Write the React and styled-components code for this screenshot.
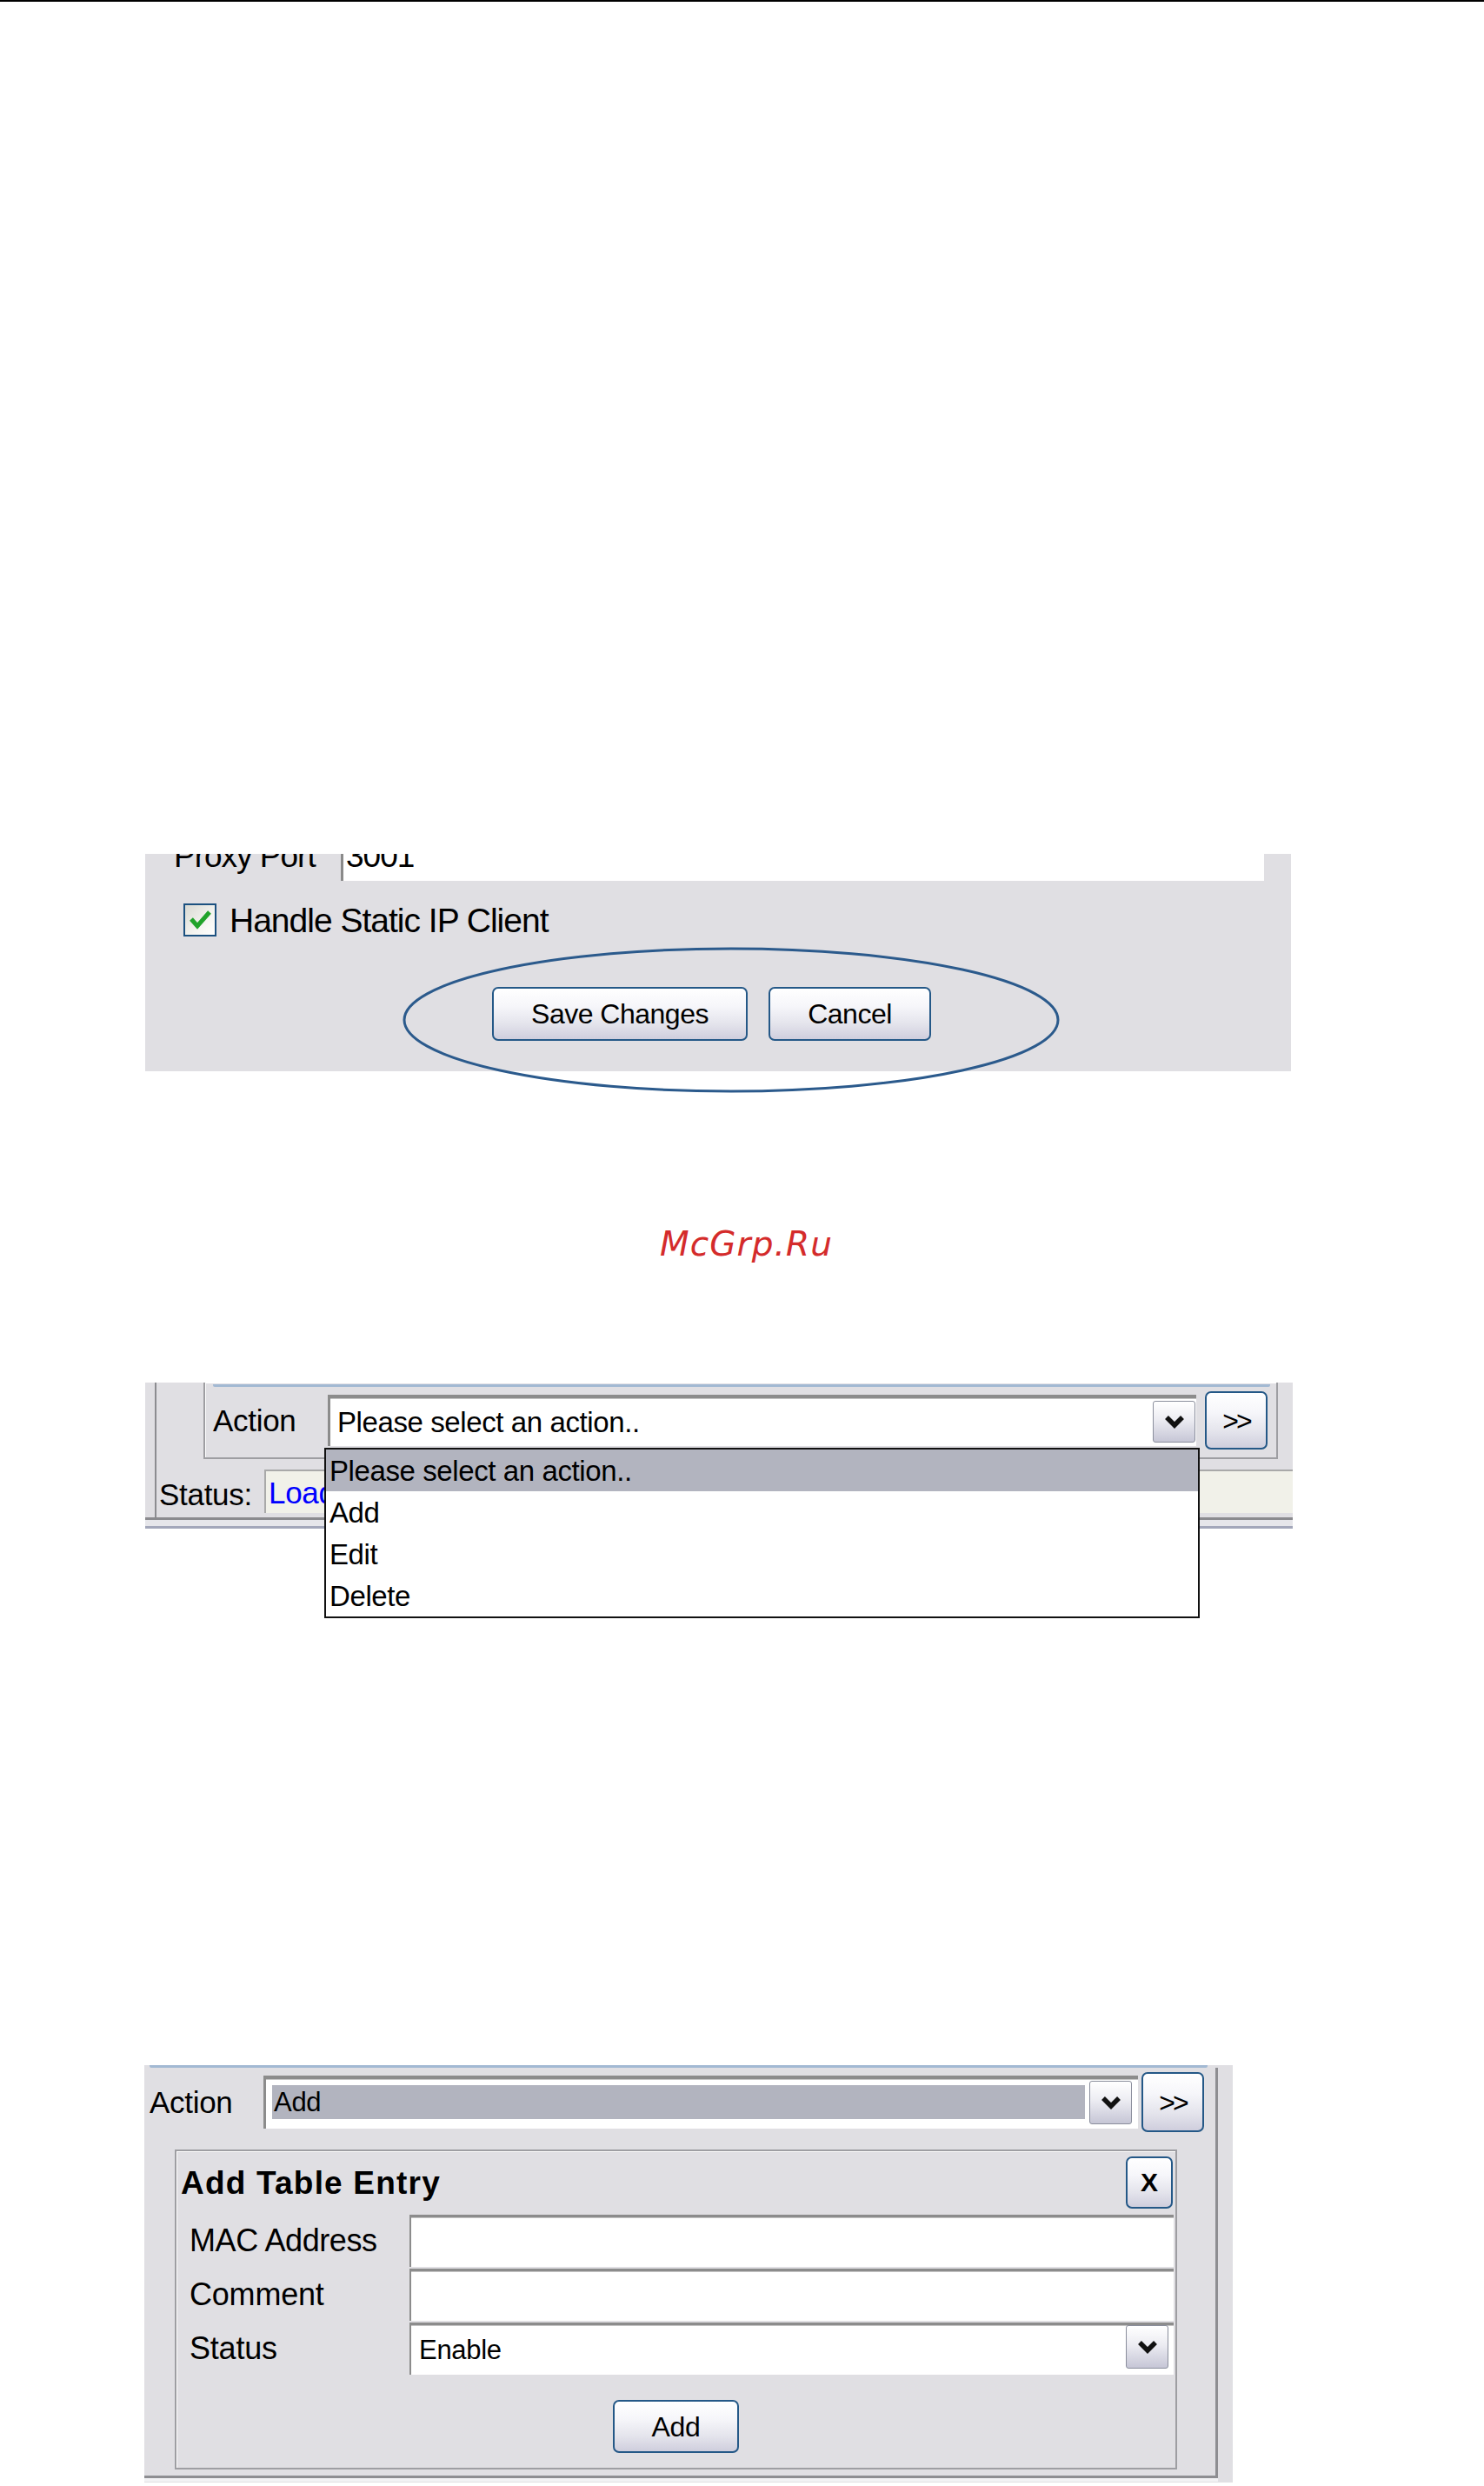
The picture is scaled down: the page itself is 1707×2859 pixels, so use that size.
import React from "react";
import styled, { createGlobalStyle } from "styled-components";

const GlobalStyle = createGlobalStyle`
  html, body { margin: 0; padding: 0; background: #ffffff; }
  body { font-family: "Liberation Sans", Arial, sans-serif; color: #000; }
  #root { width: 1707px; min-height: 2859px; }
`;

const Page = styled.div`
  width: 1707px;
  height: 2859px;
  display: flex;
  flex-direction: column;
  overflow: hidden;
  background: #fff;
`;

const TopRule = styled.div`
  flex: none;
  height: 2px;
  background: #000;
`;

const Shot = styled.div`
  flex: none;
  position: relative;
  margin-top: ${(p) => p.$top}px;
  margin-left: ${(p) => p.$left}px;
  width: ${(p) => p.$w}px;
`;

const Panel = styled.div`
  background: #e0dfe3;
  height: ${(p) => p.$h}px;
  overflow: hidden;
  display: flex;
  flex-direction: column;
`;

const Text = styled.span`
  font-size: ${(p) => p.$size || 35}px;
  letter-spacing: ${(p) => (p.$ls == null ? -0.5 : p.$ls)}px;
  font-weight: ${(p) => (p.$bold ? 700 : 400)};
  color: ${(p) => p.$color || "#000"};
  white-space: nowrap;
  line-height: 1;
`;

/* ---------- shot 1 ---------- */
const ProxyRow = styled.div`
  display: flex;
  align-items: center;
  height: 58px;
  margin-top: -27px;
  flex: none;
`;

const FieldLabel = styled.div`
  flex: none;
  width: ${(p) => p.$w}px;
  padding-left: ${(p) => p.$pl || 0}px;
  box-sizing: border-box;
`;

const PlainInput = styled.div`
  flex: none;
  width: ${(p) => p.$w}px;
  height: 100%;
  box-sizing: border-box;
  background: #fff;
  border-left: 3px solid #8a8a8a;
  padding-left: 3px;
  display: flex;
  align-items: center;
`;

const CheckRow = styled.div`
  display: flex;
  align-items: center;
  height: 40px;
  margin-top: 25px;
  padding-left: 44px;
  gap: 15px;
  flex: none;
`;

const CheckBox = styled.div`
  width: 38px;
  height: 38px;
  box-sizing: border-box;
  border: 2px solid #1c5180;
  background: linear-gradient(135deg, #d9d9d3 0%, #f4f4f0 60%, #ffffff 100%);
  display: flex;
  align-items: center;
  justify-content: center;
`;

const ButtonRow = styled.div`
  display: flex;
  gap: ${(p) => p.$gap || 0}px;
  margin-top: ${(p) => p.$mt}px;
  padding-left: ${(p) => p.$pl || 0}px;
  justify-content: ${(p) => (p.$center ? "center" : "flex-start")};
  flex: none;
`;

const XpButton = styled.div`
  flex: none;
  width: ${(p) => p.$w}px;
  height: ${(p) => p.$h}px;
  margin-left: ${(p) => p.$ml || 0}px;
  box-sizing: border-box;
  border: 2px solid #245887;
  border-radius: 7px;
  background: linear-gradient(180deg, #ffffff 0%, #f6f6fa 35%, #e4e4ec 70%, #cfcedd 100%);
  display: flex;
  align-items: center;
  justify-content: center;
`;

const EllipseMark = styled.svg`
  position: absolute;
  left: 296px;
  top: 106px;
  width: 756px;
  height: 170px;
  overflow: visible;
`;

/* ---------- watermark ---------- */
const Watermark = styled.div`
  flex: none;
  margin-top: 174px;
  height: 50px;
  line-height: 50px;
  padding-left: 759px;
  font-family: "DejaVu Sans", "Liberation Sans", sans-serif;
  font-style: italic;
  font-size: 39px;
  letter-spacing: 1.1px;
  color: #d42b2b;
`;

/* ---------- shot 2 ---------- */
const Frame = styled.div`
  flex: none;
  box-sizing: border-box;
  display: flex;
  flex-direction: column;
  margin-left: ${(p) => p.$ml || 0}px;
  width: ${(p) => p.$w}px;
  height: ${(p) => p.$h}px;
  border-left: ${(p) => (p.$left ? "2px solid #8c8c90" : "none")};
  border-right: ${(p) => (p.$right ? "3px solid #8e8e92" : "none")};
  border-bottom: ${(p) => (p.$bottom ? "3px solid #8e8e92" : "none")};
`;

const GroupBox = styled.div`
  flex: none;
  box-sizing: border-box;
  margin-left: ${(p) => p.$ml}px;
  margin-top: ${(p) => p.$mt || 0}px;
  width: ${(p) => p.$w}px;
  height: ${(p) => p.$h}px;
  border: 2px solid #9e9ea2;
  border-top: ${(p) => (p.$noTop ? "none" : "2px solid #9e9ea2")};
  box-shadow: inset 1px 1px 0 #ffffff;
  display: flex;
  flex-direction: column;
`;

const BlueLine = styled.div`
  flex: none;
  height: 3px;
  margin: ${(p) => p.$m};
  background: #a2b9d3;
  border-radius: 0 0 2px 2px;
`;

const ActionRow = styled.div`
  flex: none;
  display: flex;
  align-items: center;
  height: ${(p) => p.$h}px;
  margin-top: ${(p) => p.$mt}px;
  padding-left: ${(p) => p.$pl}px;
`;

const SelectBox = styled.div`
  flex: none;
  box-sizing: border-box;
  width: ${(p) => p.$w}px;
  height: ${(p) => p.$h}px;
  background: #fff;
  border-top: 4px solid #8c8c8c;
  border-left: 3px solid #8c8c8c;
  box-shadow: inset 0 1px 0 #c4c4c4;
  display: flex;
  align-items: stretch;
`;

const SelectText = styled.div`
  flex: 1;
  display: flex;
  align-items: center;
  padding-left: ${(p) => p.$pl}px;
`;

const Highlight = styled.div`
  flex: 1;
  display: flex;
  align-items: center;
  margin: ${(p) => p.$m};
  padding-left: 2px;
  background: #b2b4bf;
`;

const ArrowBtn = styled.div`
  flex: none;
  width: 49px;
  margin: ${(p) => p.$m};
  box-sizing: border-box;
  border: 1px solid #8a8e9c;
  border-radius: 3px;
  background: linear-gradient(180deg, #ffffff 0%, #ececf2 45%, #c6c6d6 100%);
  display: flex;
  align-items: center;
  justify-content: center;
`;

const StatusRow = styled.div`
  flex: 1;
  display: flex;
  align-items: flex-start;
  padding-left: 3px;
`;

const StatusLabel = styled.div`
  flex: none;
  width: 121px;
  margin-top: 23px;
`;

const StatusField = styled.div`
  flex: 1;
  height: 50px;
  margin-top: 12px;
  box-sizing: border-box;
  background: #f1f1e9;
  border-top: 2px solid #a9a9a9;
  border-left: 2px solid #a9a9a9;
  padding-left: 3px;
  display: flex;
  align-items: center;
`;

const DoubleLine = styled.div`
  flex: none;
  height: 13px;
  box-sizing: border-box;
  border-top: 3px solid #8b8b8f;
  border-bottom: 3px solid #a3a7ba;
  background: #e6e6ea;
`;

const DropList = styled.div`
  position: absolute;
  left: 206px;
  top: 75px;
  width: 1007px;
  box-sizing: border-box;
  border: 2px solid #111;
  background: #fff;
  display: flex;
  flex-direction: column;
`;

const DropItem = styled.div`
  height: 48px;
  display: flex;
  align-items: center;
  padding-left: 4px;
  background: ${(p) => (p.$active ? "#b2b4bf" : "#fff")};
`;

/* ---------- shot 3 ---------- */
const TitleRow = styled.div`
  flex: none;
  display: flex;
  align-items: center;
  justify-content: space-between;
  height: 60px;
  margin-top: 6px;
  padding: 0 3px 0 5px;
`;

const FormGrid = styled.div`
  flex: none;
  display: grid;
  grid-template-columns: 268px 879px;
  grid-auto-rows: 60px;
  row-gap: 2px;
  margin-top: 7px;
`;

const FormLabel = styled.div`
  display: flex;
  align-items: center;
  padding-left: 15px;
`;

const FormInput = styled.div`
  box-sizing: border-box;
  background: #fff;
  border-top: 3px solid #8c8c8c;
  border-left: 2px solid #8c8c8c;
  box-shadow: inset 0 1px 0 #c4c4c4;
  display: flex;
  align-items: stretch;
`;

const BottomStrip = styled.div`
  flex: none;
  height: 4px;
  width: 1235px;
  background: #f2f2f4;
`;

const Chevron = () => (
  <svg width="24" height="17" viewBox="0 0 24 17">
    <path d="M3 3 L12 12 L21 3" fill="none" stroke="#111" strokeWidth="5.5" strokeLinejoin="miter" />
  </svg>
);

const Check = () => (
  <svg width="30" height="28" viewBox="0 0 30 28">
    <path d="M5 13 L12 21 L26 5" fill="none" stroke="#21a32a" strokeWidth="5" />
  </svg>
);

export default function App() {
  return (
    <>
      <GlobalStyle />
      <Page>
        <TopRule />

        {/* Screenshot 1 */}
        <Shot $top={980} $left={167} $w={1318}>
          <Panel $h={250}>
            <ProxyRow>
              <FieldLabel $w={225} $pl={33}>
                <Text $size={37} $ls={-1}>Proxy Port</Text>
              </FieldLabel>
              <PlainInput $w={1062}>
                <Text $size={37} $ls={-1}>3001</Text>
              </PlainInput>
            </ProxyRow>
            <CheckRow>
              <CheckBox>
                <Check />
              </CheckBox>
              <Text $size={39} $ls={-1}>Handle Static IP Client</Text>
            </CheckRow>
            <ButtonRow $mt={57} $gap={24} $pl={399}>
              <XpButton $w={294} $h={62}>
                <Text $size={32} $ls={-0.5}>Save Changes</Text>
              </XpButton>
              <XpButton $w={187} $h={62}>
                <Text $size={32} $ls={-0.5}>Cancel</Text>
              </XpButton>
            </ButtonRow>
          </Panel>
          <EllipseMark viewBox="0 0 756 170">
            <ellipse cx="378" cy="85" rx="376" ry="82" fill="none" stroke="#2b5a8c" strokeWidth="3" />
          </EllipseMark>
        </Shot>

        <Watermark>McGrp.Ru</Watermark>

        {/* Screenshot 2 */}
        <Shot $top={134} $left={167} $w={1320}>
          <Panel $h={168}>
            <Frame $ml={11} $w={1309} $h={155} $left>
              <GroupBox $ml={54} $w={1236} $h={88} $noTop>
                <BlueLine $m="2px 7px 0 9px" />
                <ActionRow $h={67} $mt={5} $pl={9}>
                  <FieldLabel $w={132}>
                    <Text $size={35} $ls={-0.3}>Action</Text>
                  </FieldLabel>
                  <SelectBox $w={999} $h={59}>
                    <SelectText $pl={8}>
                      <Text $size={33} $ls={-0.4}>Please select an action..</Text>
                    </SelectText>
                    <ArrowBtn $m="3px 1px 4px 0">
                      <Chevron />
                    </ArrowBtn>
                  </SelectBox>
                  <XpButton $w={72} $h={67} $ml={10}>
                    <Text $size={32} $ls={-3}>&gt;&gt;</Text>
                  </XpButton>
                </ActionRow>
              </GroupBox>
              <StatusRow>
                <StatusLabel>
                  <Text $size={35} $ls={-0.3}>Status:</Text>
                </StatusLabel>
                <StatusField>
                  <Text $size={35} $ls={-0.3} $color="#0000ff">Loading...</Text>
                </StatusField>
              </StatusRow>
            </Frame>
            <DoubleLine />
          </Panel>
          <DropList>
            <DropItem $active>
              <Text $size={33} $ls={-0.4}>Please select an action..</Text>
            </DropItem>
            <DropItem>
              <Text $size={33} $ls={-0.4}>Add</Text>
            </DropItem>
            <DropItem>
              <Text $size={33} $ls={-0.4}>Edit</Text>
            </DropItem>
            <DropItem>
              <Text $size={33} $ls={-0.4}>Delete</Text>
            </DropItem>
          </DropList>
        </Shot>

        {/* Screenshot 3 */}
        <Shot $top={617} $left={166} $w={1252}>
          <Panel $h={480}>
            <BlueLine $m="0 29px 0 6px" />
            <Frame $w={1235} $h={472} $right $bottom>
              <ActionRow $h={69} $mt={5} $pl={6}>
                <FieldLabel $w={131}>
                  <Text $size={35} $ls={-0.3}>Action</Text>
                </FieldLabel>
                <SelectBox $w={1006} $h={61}>
                  <Highlight $m="7px 5px 11px 7px">
                    <Text $size={31} $ls={-0.3}>Add</Text>
                  </Highlight>
                  <ArrowBtn $m="2px 7px 5px 0">
                    <Chevron />
                  </ArrowBtn>
                </SelectBox>
                <XpButton $w={72} $h={69} $ml={4}>
                  <Text $size={32} $ls={-3}>&gt;&gt;</Text>
                </XpButton>
              </ActionRow>
              <GroupBox $ml={35} $mt={20} $w={1153} $h={368}>
                <TitleRow>
                  <Text $size={37} $ls={1.2} $bold>Add Table Entry</Text>
                  <XpButton $w={54} $h={60}>
                    <Text $size={30} $ls={0} $bold>X</Text>
                  </XpButton>
                </TitleRow>
                <FormGrid>
                  <FormLabel>
                    <Text $size={36} $ls={-0.4}>MAC Address</Text>
                  </FormLabel>
                  <FormInput />
                  <FormLabel>
                    <Text $size={36} $ls={-0.2}>Comment</Text>
                  </FormLabel>
                  <FormInput />
                  <FormLabel>
                    <Text $size={36} $ls={-0.2}>Status</Text>
                  </FormLabel>
                  <FormInput>
                    <SelectText $pl={9}>
                      <Text $size={31} $ls={-0.3}>Enable</Text>
                    </SelectText>
                    <ArrowBtn $m="0 6px 7px 0">
                      <Chevron />
                    </ArrowBtn>
                  </FormInput>
                </FormGrid>
                <ButtonRow $mt={29} $center>
                  <XpButton $w={145} $h={61}>
                    <Text $size={32} $ls={-0.3}>Add</Text>
                  </XpButton>
                </ButtonRow>
              </GroupBox>
            </Frame>
            <BottomStrip />
          </Panel>
        </Shot>
      </Page>
    </>
  );
}
